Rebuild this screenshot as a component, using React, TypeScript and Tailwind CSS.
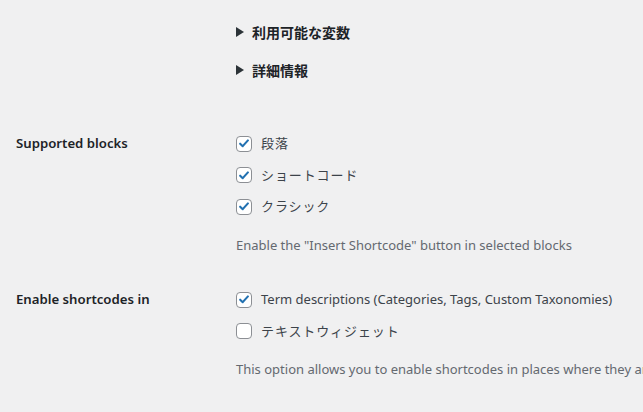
import React from "react";

const Check = ({ checked }: { checked: boolean }) => (
  <span className="flex h-4 w-4 shrink-0 items-center justify-center rounded-[4px] border border-[#8c8f94] bg-white">
    {checked && (
      <svg viewBox="0 0 20 20" className="h-[17px] w-[17px]" aria-hidden>
        <path d="M4.5 10.2 L8.2 13.8 L15.6 5.6" fill="none" stroke="#2271b1" strokeWidth="3" strokeLinecap="round" strokeLinejoin="round" />
      </svg>
    )}
  </span>
);

const Item = ({ checked, label, jp = false }: { checked: boolean; label: string; jp?: boolean }) => (
  <label className="flex h-[31.5px] items-center gap-[9px] text-[13px] text-[#3c434a]">
    <Check checked={checked} />
    <span className={jp ? "tracking-[0.9px]" : ""}>{label}</span>
  </label>
);

const Summary = ({ text, className = "" }: { text: string; className?: string }) => (
  <div className={`flex h-5 items-center gap-[8px] text-[14px] font-semibold text-[#1d2327] ${className}`}>
    <svg viewBox="0 0 8 10" className="h-[10px] w-[8px]" aria-hidden>
      <polygon points="0,0 8,5 0,10" fill="#2c3338" />
    </svg>
    <span>{text}</span>
  </div>
);

export default function App() {
  return (
    <div
      className="h-[412px] w-[643px] overflow-hidden bg-[#f0f0f1]"
      style={{ fontFamily: '"Noto Sans", "Noto Sans CJK JP", sans-serif' }}
    >
      <div className="pl-[236px] pt-[22px]">
        <Summary text="利用可能な変数" />
        <Summary text="詳細情報" className="mt-[18px]" />
      </div>

      <div className="mt-[48px] flex">
        <div className="w-[236px] shrink-0 pl-4">
          <div className="flex h-[31.5px] items-center text-[13.2px] font-semibold text-[#1d2327]">Supported blocks</div>
        </div>
        <div className="flex flex-col">
          <Item checked jp label="段落" />
          <Item checked jp label="ショートコード" />
          <Item checked jp label="クラシック" />
          <p className="mt-[12.5px] h-5 whitespace-nowrap text-[13px] leading-5 text-[#646970]">
            Enable the "Insert Shortcode" button in selected blocks
          </p>
        </div>
      </div>

      <div className="mt-[29px] flex">
        <div className="w-[236px] shrink-0 pl-4">
          <div className="flex h-[31.5px] items-center text-[13.2px] font-semibold text-[#1d2327]">Enable shortcodes in</div>
        </div>
        <div className="flex min-w-0 flex-col">
          <Item checked label="Term descriptions (Categories, Tags, Custom Taxonomies)" />
          <Item checked={false} jp label="テキストウィジェット" />
          <p className="mt-[12px] h-5 whitespace-nowrap text-[13px] leading-5 text-[#646970]">
            This option allows you to enable shortcodes in places where they are normally not supported.
          </p>
        </div>
      </div>
    </div>
  );
}
